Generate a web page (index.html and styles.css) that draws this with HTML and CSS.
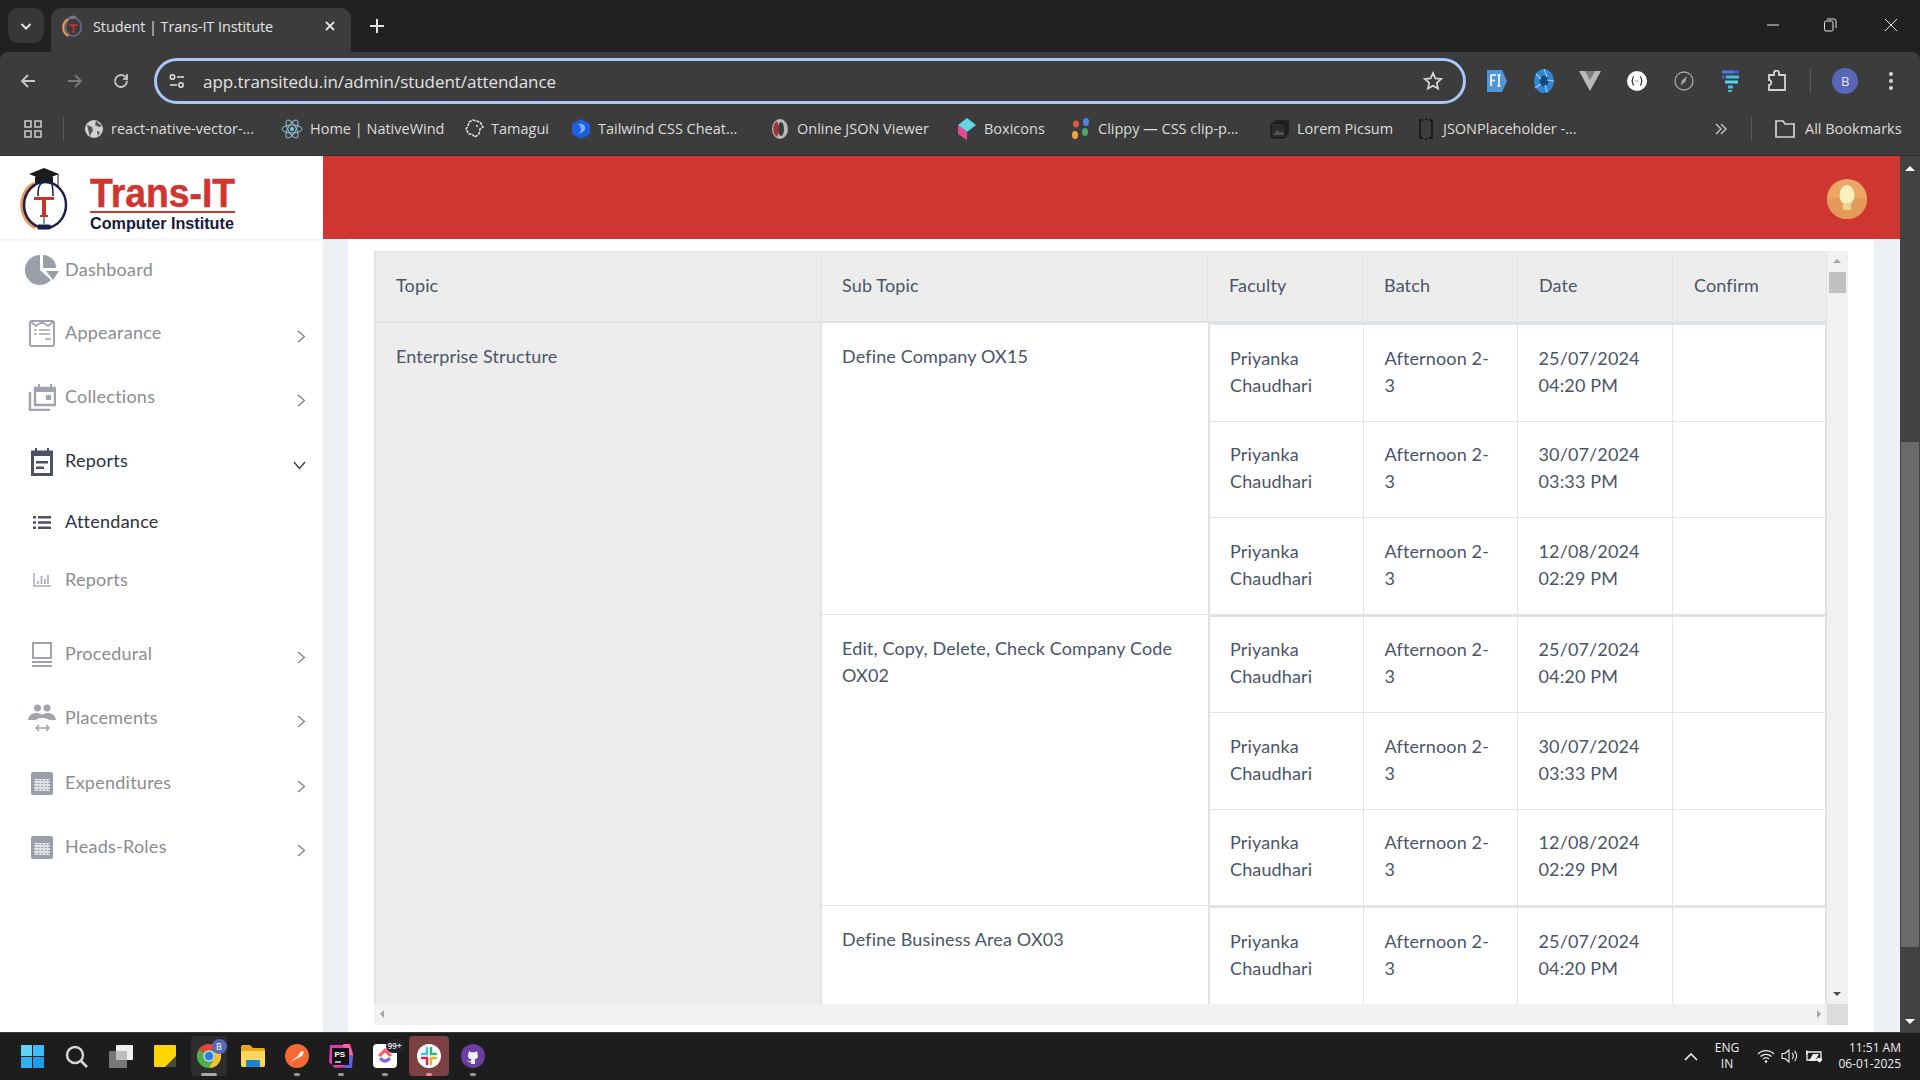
FILE: index.html
```html
<!DOCTYPE html>
<html lang="en">
<head>
<meta charset="utf-8">
<title>Student | Trans-IT Institute</title>
<link rel="stylesheet" href="styles.css">
</head>
<body>
<div class="tabstrip">
  <div class="tabsearch"><svg width="14" height="14" viewBox="0 0 14 14"><path d="M2.500 5l4.500 4.500L11.500 5" fill="none" stroke="#e3e3e3" stroke-width="2"/></svg></div>
  <div class="tab">
    <svg class="favicon" width="22" height="22" viewBox="0 0 48 48"><path d="M14 5L24 1l10 4-10 4z" fill="#888"/><path d="M15 9C1 14-3 36 14 46" fill="none" stroke="#e8954f" stroke-width="5"/><ellipse cx="25" cy="26" rx="17" ry="20" fill="none" stroke="#6d6f9a" stroke-width="3"/><path d="M16 20h18v4h-7v15h-4V24h-7z" fill="#c9322d"/></svg>
    <span class="tabtitle">Student | Trans-IT Institute</span>
    <svg class="tabclose" width="12" height="12" viewBox="0 0 12 12"><path d="M2 2l8 8M10 2l-8 8" stroke="#e3e3e3" stroke-width="1.800"/></svg>
  </div>
  <svg class="newtab" width="16" height="16" viewBox="0 0 16 16"><path d="M8 1v14M1 8h14" stroke="#e3e3e3" stroke-width="2"/></svg>
  <div class="winctl">
    <svg class="win-min" width="14" height="14" viewBox="0 0 14 14"><path d="M1 7h12" stroke="#e3e3e3"/></svg>
    <svg class="win-max" width="14" height="14" viewBox="0 0 14 14"><rect x="1.500" y="3" width="8.500" height="10" rx="1.500" fill="none" stroke="#e3e3e3"/><path d="M4 1h7a2 2 0 0 1 2 2v7" fill="none" stroke="#e3e3e3"/></svg>
    <svg width="14" height="14" viewBox="0 0 14 14"><path d="M1 1l12 12M13 1L1 13" stroke="#e3e3e3"/></svg>
  </div>
</div>

<div class="toolbar">
  <div class="navbtn"><svg width="18" height="18" viewBox="0 0 18 18"><path d="M16 9H3M9 3L3 9l6 6" fill="none" stroke="#c7c7c7" stroke-width="1.800"/></svg></div>
  <div class="navbtn"><svg width="18" height="18" viewBox="0 0 18 18"><path d="M2 9h13M9 3l6 6-6 6" fill="none" stroke="#7a7a7a" stroke-width="1.800"/></svg></div>
  <div class="navbtn"><svg width="18" height="18" viewBox="0 0 18 18"><path d="M15 9a6 6 0 1 1-1.800-4.300L15 6.500V2" fill="none" stroke="#c7c7c7" stroke-width="1.800"/><path d="M15.500 7H11" stroke="#c7c7c7" stroke-width="1.800"/></svg></div>
  <div class="omnibox">
    <svg class="siteinfo" width="18" height="18" viewBox="0 0 18 18"><circle cx="4.500" cy="5" r="2.200" fill="none" stroke="#e3e3e3" stroke-width="1.500"/><path d="M9 5h7M2 13h7" stroke="#e3e3e3" stroke-width="1.500"/><circle cx="13" cy="13" r="2.200" fill="none" stroke="#e3e3e3" stroke-width="1.500"/></svg>
    <span class="url">app.transitedu.in/admin/student/attendance</span>
    <svg class="star" width="20" height="20" viewBox="0 0 20 20"><path d="M10 2l2.400 5.400 5.800.6-4.400 3.900 1.300 5.700L10 14.700l-5.100 2.900 1.300-5.700L1.800 8l5.800-.6z" fill="none" stroke="#d8d8d8" stroke-width="1.700"/></svg>
  </div>
  <div class="extensions">
    <div class="ext"><svg width="22" height="24" viewBox="0 0 22 24"><path d="M1 1h15l5 11-5 11H1z" fill="#4f97d9"/><path d="M5 6h5M5 6v11M5 11.500h4M13 6v11M11.500 6h3M11.500 17h3" stroke="#fff" stroke-width="1.600" fill="none"/></svg></div>
    <div class="ext"><svg width="22" height="26" viewBox="0 0 22 26"><ellipse cx="11" cy="13" rx="10" ry="12" fill="#2f86d3"/><ellipse cx="11" cy="13" rx="4.500" ry="5.500" fill="#10497c"/><path d="M11 1l3 8M21 13l-7-1M14 24l-2-7M2 20l6-4M3 6l5 5" stroke="#a8d2f0" stroke-width="1.100"/></svg></div>
    <div class="ext"><svg width="22" height="20" viewBox="0 0 22 20"><path d="M0 0h22L11 20z" fill="#b9b9b9"/><path d="M6 0h10l-5 9z" fill="#7b7b7b"/></svg></div>
    <div class="ext"><svg width="20" height="20" viewBox="0 0 20 20"><circle cx="10" cy="10" r="10" fill="#fff"/><path d="M7 5.500C5 5.500 6.500 10 4.500 10c2 0 .5 4.500 2.500 4.500M13 5.500c2 0 .5 4.500 2.500 4.500-2 0-.5 4.500-2.500 4.500" fill="none" stroke="#222" stroke-width="1.200"/><path d="M8.500 10h.8M10.500 10h.8" stroke="#222" stroke-width="1.200"/></svg></div>
    <div class="ext"><svg width="20" height="20" viewBox="0 0 20 20"><circle cx="10" cy="10" r="9" fill="none" stroke="#a8a8a8" stroke-width="1.300"/><path d="M6.500 14.500L8 9.500l5-4.500-1.500 5.500z" fill="#a8a8a8"/></svg></div>
    <div class="ext"><svg width="22" height="22" viewBox="0 0 22 22"><path d="M3 2h12" stroke="#4a78e8" stroke-width="3"/><path d="M15 2h5M3 7h3" stroke="#3b5fc4" stroke-width="3"/><path d="M7 7h13" stroke="#3fc0ea" stroke-width="3"/><path d="M6 12h13" stroke="#56d5ee" stroke-width="3"/><path d="M9 17h5" stroke="#3fc0ea" stroke-width="3"/><path d="M9 21h4" stroke="#3fc0ea" stroke-width="2"/></svg></div>
    <div class="ext"><svg width="22" height="22" viewBox="0 0 22 22"><path d="M3 5h5V3a2.500 2.500 0 0 1 5 0v2h6v15H3v-5h1a3 3 0 0 0 0-5H3z" fill="none" stroke="#d4d4d4" stroke-width="1.800"/></svg></div>
  </div>
  <div class="toolsep"></div>
  <div class="avatarbox"><span class="avatar">B</span></div>
  <div class="avatarbox"><svg width="6" height="20" viewBox="0 0 6 20"><circle cx="3" cy="3" r="2" fill="#d8d8d8"/><circle cx="3" cy="10" r="2" fill="#d8d8d8"/><circle cx="3" cy="17" r="2" fill="#d8d8d8"/></svg></div>
</div>

<div class="bookmarks">
  <svg class="bm-apps" width="18" height="18" viewBox="0 0 18 18"><path d="M1 1h6v6H1zM11 1h6v6h-6zM1 11h6v6H1zM11 11h6v6h-6z" fill="none" stroke="#c7c7c7" stroke-width="1.600"/></svg>
  <span class="bm-sep"></span>
  <div class="bm"><svg width="20" height="20" viewBox="0 0 20 20"><circle cx="10" cy="10" r="9" fill="#cfcfcf"/><path d="M3 6l5 2 1 4-2 2-1 4M12 2l-1 4 4 2 3-1M13 12l3 1-2 4z" fill="#555"/></svg><span>react-native-vector-...</span></div>
  <div class="bm"><svg width="22" height="22" viewBox="0 0 22 22"><g fill="none" stroke="#8fc5d8" stroke-width="1"><ellipse cx="11" cy="11" rx="10" ry="4"/><ellipse cx="11" cy="11" rx="10" ry="4" transform="rotate(60 11 11)"/><ellipse cx="11" cy="11" rx="10" ry="4" transform="rotate(120 11 11)"/></g><circle cx="11" cy="11" r="2" fill="#8fc5d8"/></svg><span>Home | NativeWind</span></div>
  <div class="bm"><svg width="20" height="20" viewBox="0 0 20 20"><path d="M5 3l4-2 7 2 3 5-3 2-1 5-4 3-3-3-3 0-3-5 2-3z" fill="none" stroke="#e6e6e6" stroke-width="1.500" stroke-dasharray="3 1"/><circle cx="13" cy="7" r="1" fill="#e6e6e6"/></svg><span>Tamagui</span></div>
  <div class="bm"><svg width="20" height="20" viewBox="0 0 20 20"><path d="M10 0l9 5v10l-9 5-9-5V5z" fill="#1d5fe0"/><path d="M7 5c5-1 8 2 7 5s-4 4-7 5c2-2 3-3 3-5S9 7 7 5z" fill="#7bb0ff"/></svg><span>Tailwind CSS Cheat...</span></div>
  <div class="bm"><svg width="20" height="22" viewBox="0 0 20 22"><ellipse cx="10" cy="11" rx="8" ry="10" fill="#b9b9b9"/><path d="M7 3c-5 3-5 13 0 16 2-4 2-12 0-16z" fill="#a8312e"/><ellipse cx="11" cy="11" rx="3" ry="7" fill="#3c3c3c"/></svg><span>Online JSON Viewer</span></div>
  <div class="bm"><svg width="20" height="22" viewBox="0 0 20 22"><path d="M10 0l9 7-9 7-9-7z" fill="#62d6e3"/><path d="M1 7l9 7v8l-9-6z" fill="#e9478f"/></svg><span>Boxicons</span></div>
  <div class="bm"><svg width="20" height="22" viewBox="0 0 20 22"><ellipse cx="5" cy="6" rx="3" ry="3.500" fill="#d95a3d"/><ellipse cx="15" cy="4" rx="3" ry="4" fill="#4a86e8"/><ellipse cx="4" cy="17" rx="3" ry="4" fill="#f0a63a"/><ellipse cx="14" cy="14" rx="3" ry="4" fill="#4ca667"/></svg><span>Clippy — CSS clip-p...</span></div>
  <div class="bm"><svg width="20" height="20" viewBox="0 0 20 20"><rect x="4" y="1" width="15" height="15" rx="2" fill="#222"/><rect x="1" y="4" width="15" height="15" rx="2" fill="#2b2b2b" stroke="#111"/><path d="M3 16l4-5 3 3 2-2 2 4z" fill="#555"/></svg><span>Lorem Picsum</span></div>
  <div class="bm"><svg width="20" height="22" viewBox="0 0 20 22"><path d="M7 2H4v18h3M13 2h3v18h-3M10 0v2M10 20v2" fill="none" stroke="#111" stroke-width="1.500"/></svg><span>JSONPlaceholder -...</span></div>
  <svg class="bm-more" width="14" height="14" viewBox="0 0 14 14"><path d="M2 2l5 5-5 5M7 2l5 5-5 5" fill="none" stroke="#c7c7c7" stroke-width="1.400"/></svg>
  <span class="bm-sep"></span>
  <svg class="bm-folder" width="22" height="20" viewBox="0 0 22 20"><path d="M2 2h7l2 3h9v13H2z" fill="none" stroke="#d4d4d4" stroke-width="1.700"/></svg>
  <span class="bm-all">All Bookmarks</span>
</div>

<div class="page">
  <div class="main">
    <header class="topbar">
      <div class="brand">
        <svg class="brand-mark" width="48" height="63" viewBox="0 0 48 63">
          <path d="M9 7L24 1l15 6-15 6z" fill="#1b1b1b"/><path d="M15 10v6h18v-6" fill="#1b1b1b"/><path d="M38 7v13" stroke="#1b1b1b"/>
          <path d="M15 17C0 24-3 50 16 60" fill="none" stroke="#e8954f" stroke-width="5"/>
          <ellipse cx="25" cy="38" rx="21" ry="23" fill="none" stroke="#1b1f4b" stroke-width="2.500"/>
          <path d="M26 15c-8 0-8 8-8 14M31 15c2 3 2 8 2 14" fill="none" stroke="#1b1f4b" stroke-width="1.500"/>
          <path d="M14 30h20v3h-8v15h2v2h-8v-2h2V33h-8z" fill="#c9322d"/>
          <path d="M24 50v7M18 58h11l4 2-4 2H18z" fill="#1b1f4b" stroke="#1b1f4b"/>
        </svg>
        <div class="brand-text">
          <span class="brand-name">Trans-IT</span>
          <span class="brand-sub">Computer Institute</span>
        </div>
      </div>
      <div class="redbar">
        <div class="bulb"><svg width="40" height="40" viewBox="0 0 40 40"><circle cx="20" cy="20" r="20" fill="#eda765"/><path d="M0 20a20 20 0 0 0 40 0v-1H0z" fill="#e49a5b"/><ellipse cx="20" cy="16" rx="7.500" ry="10" fill="#fdeec0"/><rect x="16" y="24" width="8" height="7" fill="#efd28f"/></svg></div>
      </div>
    </header>
    <div class="body-row">
      <nav class="sidebar">
        <a class="nav nav-first">
          <span class="ico"><svg width="34" height="30" viewBox="0 0 34 30"><path d="M15 0A15 15 0 1 0 26 25L15 15z" fill="#9a9ea9"/><path d="M18 0a13 13 0 0 1 13 13H18z" fill="#9a9ea9"/><path d="M21 16h13l-6 9z" fill="#9a9ea9"/></svg></span>
          <span class="label">Dashboard</span>
        </a>
        <a class="nav">
          <span class="ico"><svg width="26" height="27" viewBox="0 0 26 27"><rect x="1" y="1" width="24" height="25" rx="2" fill="none" stroke="#a1a4ae" stroke-width="2"/><path d="M2 2l5 4 6-4 6 4 5-4M5 10h3M10 10h11M5 14h3M10 14h11M16 19h6" fill="none" stroke="#a1a4ae" stroke-width="1.700"/></svg></span>
          <span class="label">Appearance</span>
          <svg class="chev" width="9" height="13" viewBox="0 0 9 13"><path d="M1 1l6.500 5.500L1 12" fill="none" stroke="#777" stroke-width="1.100"/></svg>
        </a>
        <a class="nav">
          <span class="ico"><svg width="28" height="28" viewBox="0 0 28 28"><path d="M7 5h20v17H7z" fill="none" stroke="#a1a4ae" stroke-width="2.400"/><path d="M7 5h20v4H7z" fill="#a1a4ae"/><path d="M11 1v4M23 1v4" stroke="#a1a4ae" stroke-width="2"/><rect x="18" y="12" width="5" height="5" fill="#a1a4ae"/><path d="M2 9v18h20" fill="none" stroke="#a1a4ae" stroke-width="2.400"/></svg></span>
          <span class="label">Collections</span>
          <svg class="chev" width="9" height="13" viewBox="0 0 9 13"><path d="M1 1l6.500 5.500L1 12" fill="none" stroke="#777" stroke-width="1.100"/></svg>
        </a>
        <a class="nav is-open">
          <span class="ico"><svg width="22" height="29" viewBox="0 0 22 29"><path d="M1.500 5h19v22.500h-19z" fill="none" stroke="#4d5066" stroke-width="3"/><path d="M1 4h20v5H1z" fill="#4d5066"/><path d="M5 1v4M17 1v4" stroke="#4d5066" stroke-width="2"/><path d="M5 14h12v2.500H5zM5 19.500h8V22H5z" fill="#4d5066"/></svg></span>
          <span class="label">Reports</span>
          <svg class="chev-down" width="13" height="9" viewBox="0 0 13 9"><path d="M1 1l5.500 6.500L12 1" fill="none" stroke="#333" stroke-width="1.200"/></svg>
        </a>
        <a class="sub is-current">
          <span class="ico"><svg width="18" height="15" viewBox="0 0 18 15"><path d="M0 1h3v2.400H0zM5 1h13v2.400H5zM0 6.300h3v2.400H0zM5 6.300h13v2.400H5zM0 11.600h3V14H0zM5 11.600h13V14H5z" fill="#4d5066"/></svg></span>
          <span class="label">Attendance</span>
        </a>
        <a class="sub">
          <span class="ico"><svg width="18" height="14" viewBox="0 0 18 14"><path d="M1 0v13h17" fill="none" stroke="#a9acb7" stroke-width="1.500"/><path d="M5 8v3M8.500 3v8M12 6v5M15 2v9" stroke="#a9acb7" stroke-width="1.700"/></svg></span>
          <span class="label">Reports</span>
        </a>
        <a class="nav nav-gap">
          <span class="ico"><svg width="20" height="25" viewBox="0 0 20 25"><rect x="1" y="1" width="18" height="15" fill="none" stroke="#a1a4ae" stroke-width="2"/><path d="M0 20h20M0 24h20" stroke="#a1a4ae" stroke-width="2"/></svg></span>
          <span class="label">Procedural</span>
          <svg class="chev" width="9" height="13" viewBox="0 0 9 13"><path d="M1 1l6.500 5.500L1 12" fill="none" stroke="#777" stroke-width="1.100"/></svg>
        </a>
        <a class="nav">
          <span class="ico"><svg width="28" height="28" viewBox="0 0 28 28"><circle cx="9.500" cy="4" r="3.500" fill="#a1a4ae"/><circle cx="19" cy="4" r="3.500" fill="#a1a4ae"/><path d="M0 16c1-6 5-7 9-7 3 0 4 1 5 2 1-1 3-2 6-2 4 0 7 2 8 7h-7c-1-1-3-2-6-2-5 0-6 1-7 2z" fill="#a1a4ae"/><path d="M8 24h13M11 21l-3 3 3 3M18 21l3 3-3 3" fill="none" stroke="#a1a4ae" stroke-width="1.500"/></svg></span>
          <span class="label">Placements</span>
          <svg class="chev" width="9" height="13" viewBox="0 0 9 13"><path d="M1 1l6.500 5.500L1 12" fill="none" stroke="#777" stroke-width="1.100"/></svg>
        </a>
        <a class="nav nav-shift">
          <span class="ico"><svg width="22" height="23" viewBox="0 0 22 23"><rect width="22" height="23" rx="2" fill="#9a9ea9"/><rect x="3" y="7" width="16" height="12" fill="#dfe0e4"/><path d="M3 8.500h16M3 11.500h16M3 14.500h16M3 17.500h16" stroke="#9a9ea9" stroke-dasharray="2 1.500"/></svg></span>
          <span class="label">Expenditures</span>
          <svg class="chev" width="9" height="13" viewBox="0 0 9 13"><path d="M1 1l6.500 5.500L1 12" fill="none" stroke="#777" stroke-width="1.100"/></svg>
        </a>
        <a class="nav">
          <span class="ico"><svg width="22" height="23" viewBox="0 0 22 23"><rect width="22" height="23" rx="2" fill="#9a9ea9"/><rect x="3" y="7" width="16" height="12" fill="#dfe0e4"/><path d="M3 8.500h16M3 11.500h16M3 14.500h16M3 17.500h16" stroke="#9a9ea9" stroke-dasharray="2 1.500"/></svg></span>
          <span class="label">Heads-Roles</span>
          <svg class="chev" width="9" height="13" viewBox="0 0 9 13"><path d="M1 1l6.500 5.500L1 12" fill="none" stroke="#777" stroke-width="1.100"/></svg>
        </a>
      </nav>
      <main class="content">
        <section class="card">
          <div class="tablebox">
            <div class="tableview">
              <div class="thead">
                <div class="th th-topic">Topic</div>
                <div class="th th-sub">Sub Topic</div>
                <div class="th">Faculty</div>
                <div class="th">Batch</div>
                <div class="th">Date</div>
                <div class="th">Confirm</div>
              </div>
              <div class="tbody">
                <div class="topic">Enterprise Structure</div>
                <div class="groups">
                  <div class="group">
                    <div class="subtopic">Define Company OX15</div>
                    <div class="rows">
                      <div class="row"><div class="td">Priyanka Chaudhari</div><div class="td">Afternoon 2-3</div><div class="td">25/07/2024 04:20 PM</div><div class="td"></div></div>
                      <div class="row"><div class="td">Priyanka Chaudhari</div><div class="td">Afternoon 2-3</div><div class="td">30/07/2024 03:33 PM</div><div class="td"></div></div>
                      <div class="row"><div class="td">Priyanka Chaudhari</div><div class="td">Afternoon 2-3</div><div class="td">12/08/2024 02:29 PM</div><div class="td"></div></div>
                    </div>
                  </div>
                  <div class="group">
                    <div class="subtopic">Edit, Copy, Delete, Check Company Code OX02</div>
                    <div class="rows">
                      <div class="row"><div class="td">Priyanka Chaudhari</div><div class="td">Afternoon 2-3</div><div class="td">25/07/2024 04:20 PM</div><div class="td"></div></div>
                      <div class="row"><div class="td">Priyanka Chaudhari</div><div class="td">Afternoon 2-3</div><div class="td">30/07/2024 03:33 PM</div><div class="td"></div></div>
                      <div class="row"><div class="td">Priyanka Chaudhari</div><div class="td">Afternoon 2-3</div><div class="td">12/08/2024 02:29 PM</div><div class="td"></div></div>
                    </div>
                  </div>
                  <div class="group">
                    <div class="subtopic">Define Business Area OX03</div>
                    <div class="rows">
                      <div class="row"><div class="td">Priyanka Chaudhari</div><div class="td">Afternoon 2-3</div><div class="td">25/07/2024 04:20 PM</div><div class="td"></div></div>
                    </div>
                  </div>
                </div>
              </div>
            </div>
            <div class="vscroll">
              <span class="arr arr-up"></span>
              <span class="vthumb"></span>
              <span class="arr arr-down"></span>
            </div>
            <div class="hscroll">
              <span class="arr arr-left"></span>
              <span class="arr arr-right"></span>
            </div>
            <div class="corner"></div>
          </div>
        </section>
      </main>
    </div>
  </div>
  <div class="pagescroll">
    <span class="parr parr-up"></span>
    <span class="pthumb"></span>
    <span class="parr parr-down"></span>
  </div>
</div>

<footer class="taskbar">
  <div class="tb"><svg width="23" height="23" viewBox="0 0 23 23"><path d="M0 0h11v11H0z" fill="#5fd4f7"/><path d="M12 0h11v11H12z" fill="#3dbcf5"/><path d="M0 12h11v11H0z" fill="#2ab2f2"/><path d="M12 12h11v11H12z" fill="#169cf0"/></svg></div>
  <div class="tb"><svg width="23" height="23" viewBox="0 0 23 23"><circle cx="10" cy="10" r="8" fill="none" stroke="#d8d8d8" stroke-width="2.400"/><path d="M16 16l6 6" stroke="#d8d8d8" stroke-width="2.600"/></svg></div>
  <div class="tb"><svg width="24" height="23" viewBox="0 0 24 23"><rect x="7" y="0" width="17" height="15" rx="1" fill="#f0f0f0"/><rect x="0" y="6" width="18" height="17" rx="1" fill="#777"/><rect x="7" y="6" width="11" height="9" fill="#bdbdbd"/></svg></div>
  <div class="tb"><svg width="22" height="22" viewBox="0 0 22 22"><path d="M0 1a1 1 0 0 1 1-1h20a1 1 0 0 1 1 1v12l-9 9H1a1 1 0 0 1-1-1z" fill="#ffd400"/><path d="M22 11v10a1 1 0 0 1-1 1H11z" fill="#4a4a3a"/></svg></div>
  <div class="tb tb-chrome">
    <svg width="24" height="24" viewBox="0 0 24 24"><circle cx="12" cy="12" r="12" fill="#4caf50"/><path d="M12 0a12 12 0 0 1 10.400 6H12a6 6 0 0 0-5.200 3L1.600 6A12 12 0 0 1 12 0z" fill="#ea4335"/><path d="M22.400 6A12 12 0 0 1 12 24l5.200-9A6 6 0 0 0 17 9z" fill="#fbc02d"/><circle cx="12" cy="12" r="5.500" fill="#fff"/><circle cx="12" cy="12" r="4.500" fill="#2f7de1"/></svg>
    <span class="tb-badge">B</span>
    <span class="tb-dot tb-dot-wide"></span>
  </div>
  <div class="tb"><svg width="24" height="22" viewBox="0 0 24 22"><path d="M0 2a2 2 0 0 1 2-2h7l3 3h10a2 2 0 0 1 2 2v15a2 2 0 0 1-2 2H2a2 2 0 0 1-2-2z" fill="#e8a820"/><path d="M0 6h24v14a2 2 0 0 1-2 2H2a2 2 0 0 1-2-2z" fill="#fbd75b"/><rect x="5" y="15" width="14" height="7" rx="1" fill="#1b84d0"/></svg></div>
  <div class="tb"><svg width="24" height="24" viewBox="0 0 24 24"><circle cx="12" cy="12" r="12" fill="#f76935"/><path d="M5 18l8-6 3-5 3 1-2 4-6 3z" fill="#fff"/></svg><span class="tb-dot"></span></div>
  <div class="tb"><svg width="24" height="24" viewBox="0 0 24 24"><path d="M1 1l20 0 3 8-2 14-16 1-6-6z" fill="#e838b0"/><path d="M14 0h7l3 12-8 0z" fill="#ff5fa2"/><path d="M18 10l6 2-1 12-8 0z" fill="#5a5fe8"/><rect x="3" y="4" width="17" height="17" fill="#111"/><text x="5.500" y="13" class="ps">PS</text><path d="M6 18h6" stroke="#fff" stroke-width="1.300"/></svg><span class="tb-dot"></span></div>
  <div class="tb"><svg width="24" height="24" viewBox="0 0 24 24"><rect width="24" height="24" rx="4" fill="#fff"/><path d="M6 15l2.500-2c2 3 5 3 7 0l2.500 2c-3.500 5-8.500 5-12 0z" fill="#7b68ee"/><path d="M12 4L5 11l2.300 2L12 8.500l4.700 4.500L19 11z" fill="#fc5a6a"/></svg><span class="tb-99">99+</span><span class="tb-dot"></span></div>
  <div class="tb tb-slack"><svg width="24" height="24" viewBox="0 0 24 24"><circle cx="12" cy="12" r="12" fill="#fff"/><path d="M10 4v6H5" fill="none" stroke="#36c5f0" stroke-width="2.500" stroke-linecap="round"/><path d="M14 4v6h0" fill="none" stroke="#2eb67d" stroke-width="2.500" stroke-linecap="round"/><path d="M14 10h5" stroke="#2eb67d" stroke-width="2.500" stroke-linecap="round"/><path d="M19 14h-5v6" fill="none" stroke="#ecb22e" stroke-width="2.500" stroke-linecap="round"/><path d="M5 14h5v6" fill="none" stroke="#e01e5a" stroke-width="2.500" stroke-linecap="round"/></svg><span class="tb-dot tb-dot-pink"></span></div>
  <div class="tb"><svg width="24" height="24" viewBox="0 0 24 24"><circle cx="12" cy="12" r="12" fill="#6b3fa0"/><path d="M8 7l2 1.200h4L16 7l.6 3c.9 2.600 0 5-3.100 5.300.6.500.6 1.200.6 3v1.700h-4.200V18c-2 .4-3-.5-3.500-1.800 1 .4 1.700 1.300 3.500.8 0-.8.200-1.400.5-1.700-3 -.3-4-2.700-3-5.300z" fill="#eee"/></svg><span class="tb-dot"></span></div>
  <div class="tray">
    <svg class="tray-chev" width="14" height="9" viewBox="0 0 14 9"><path d="M1 8l6-6 6 6" fill="none" stroke="#e8e8e8" stroke-width="1.700"/></svg>
    <div class="lang"><span>ENG</span><span>IN</span></div>
    <div class="trayicon"><svg width="18" height="14" viewBox="0 0 18 14"><path d="M1 5a11 11 0 0 1 16 0M3.500 7.500a8 8 0 0 1 11 0M6 10a4.500 4.500 0 0 1 6 0" fill="none" stroke="#eee" stroke-width="1.200"/><circle cx="9" cy="12.500" r="1.300" fill="#eee"/></svg></div>
    <div class="trayicon"><svg width="18" height="16" viewBox="0 0 18 16"><path d="M1 5.500h3L8 2v12l-4-3.500H1z" fill="none" stroke="#eee" stroke-width="1.100"/><path d="M11 5a4 4 0 0 1 0 6M13.500 3a7 7 0 0 1 0 10" fill="none" stroke="#eee" stroke-width="1.100"/></svg></div>
    <div class="trayicon"><svg width="18" height="16" viewBox="0 0 18 16"><path d="M2 4h14v8H2z" fill="none" stroke="#eee" stroke-width="1.300"/><path d="M1 2l3 2-3 3zM4 13l4-7h6l-4 7z" fill="#eee"/><path d="M12 11c1-2 2.500-1 2.500 0 0-1 1.500-2 2.500 0 .5 1.500-2.500 3.500-2.500 3.500S11.500 12.500 12 11z" fill="#fff"/></svg></div>
    <div class="clock"><span>11:51 AM</span><span>06-01-2025</span></div>
  </div>
</footer>
</body>
</html>
```

FILE: styles.css
```css
* { box-sizing: border-box; }
html, body { margin: 0; height: 100%; overflow: hidden; }
body {
  display: flex;
  flex-direction: column;
  height: 1080px;
  font-family: "Open Sans", "Noto Sans", sans-serif;
  background: #202221;
}

/* browser chrome */
.tabstrip {
  height: 52px;
  flex: none;
  display: flex;
  align-items: flex-end;
  background: #202221;
  padding-left: 8px;
}
.tabsearch {
  width: 36px;
  height: 35px;
  margin-bottom: 9px;
  border-radius: 10px;
  background: #363737;
  display: flex;
  align-items: center;
  justify-content: center;
}
.tab {
  width: 300px;
  height: 44px;
  margin-left: 7px;
  background: #3c3c3c;
  border-radius: 10px 10px 0 0;
  display: flex;
  align-items: center;
  padding: 0 15px 8px 11px;
  color: #e3e3e3;
}
.favicon { flex: none; }
.tabtitle { margin-left: 9px; font-size: 14.500px; flex: 1; white-space: nowrap; letter-spacing: -.1px; }
.newtab { margin: 0 0 18px 18px; }
.winctl {
  margin-left: auto;
  display: flex;
  align-self: stretch;
  align-items: center;
  padding: 0 22px 2px 0;
  gap: 46px;
}
.win-min { margin-right: -3px; }
.win-max { margin-right: 1px; }

.toolbar {
  height: 52px;
  flex: none;
  background: #3c3c3c;
  border-radius: 8px 8px 0 0;
  display: flex;
  align-items: flex-start;
  padding: 6px 0 0 5px;
}
.navbtn {
  width: 46.500px;
  height: 46px;
  display: flex;
  align-items: center;
  justify-content: center;
}
.omnibox {
  width: 1312px;
  height: 46px;
  margin-left: 9.500px;
  border: 3px solid #a8c7fa;
  border-radius: 23px;
  display: flex;
  align-items: center;
  padding: 0 20px 0 11px;
  color: #e3e3e3;
}
.siteinfo { flex: none; }
.url { margin-left: 17px; font-size: 17px; flex: 1; letter-spacing: -.05px; }
.extensions { display: flex; margin-left: 8px; }
.ext { width: 46.600px; height: 46px; display: flex; align-items: center; justify-content: center; }
.toolsep { width: 1px; height: 24px; margin: 11px 11px 0 10px; background: #5c5c5c; }
.avatarbox { width: 46px; height: 46px; display: flex; align-items: center; justify-content: center; }
.avatar {
  width: 26px;
  height: 26px;
  border-radius: 50%;
  background: #5866b8;
  color: #e8e8f8;
  font-size: 13px;
  display: flex;
  align-items: center;
  justify-content: center;
}

.bookmarks {
  height: 52px;
  flex: none;
  background: #3c3c3c;
  border-bottom: 1px solid #303030;
  display: grid;
  grid-template-columns: 39px 1px 197px 183px 107px 199px 187px 114px 199px 146px 314px 41px 1px 44px auto;
  align-items: center;
  padding-left: 24px;
  padding-bottom: 2px;
  color: #dcdcdc;
  font-size: 14.500px;
  white-space: nowrap;
}
.bm-sep { width: 1px; height: 24px; background: #5c5c5c; }
.bm { display: flex; align-items: center; gap: 7px; padding-left: 20px; overflow: hidden; }
.bm svg { flex: none; }
.bm-more { margin-left: 4px; }
.bm-folder { justify-self: end; }
.bm-all { margin-left: 9px; }

/* page */
.page {
  flex: 1;
  min-height: 0;
  display: flex;
  background: #fff;
}
.main { flex: 1; min-width: 0; display: flex; flex-direction: column; }
.topbar { height: 83px; flex: none; display: flex; }
.brand {
  width: 323px;
  flex: none;
  background: #fff;
  display: flex;
  align-items: center;
  padding: 0 0 0 20px;
  gap: 22px;
}
.brand-mark { flex: none; margin-top: 2px; }
.brand-text {
  align-self: flex-start;
  margin-top: 20.250px;
  display: flex;
  flex-direction: column;
  font-family: "Liberation Sans", Arial, sans-serif;
  font-weight: 700;
  white-space: nowrap;
}
.brand-name {
  height: 34.500px;
  font-size: 41px;
  line-height: 34.500px;
  color: #d1352f;
  -webkit-text-stroke: .5px #d1352f;
  transform: scaleX(.91);
  transform-origin: left center;
}
.brand-sub {
  width: 145px;
  border-top: 2.500px solid #d1352f;
  padding-top: 1px;
  font-size: 16.200px;
  line-height: 18px;
  color: #17183f;
}
.redbar {
  flex: 1;
  background: #cf3631;
  display: flex;
  align-items: center;
  justify-content: flex-end;
  padding-right: 33px;
}
.bulb { width: 40px; height: 40px; margin-top: 3px; }

.body-row { flex: 1; min-height: 0; display: flex; }
.sidebar {
  width: 323px;
  flex: none;
  background: #fff;
  display: flex;
  flex-direction: column;
  box-shadow: inset 0 5px 5px -5px #e4e6ea;
  font-family: Lato, sans-serif;
  font-size: 18px;
  color: #8a8c93;
}
.nav, .sub {
  display: flex;
  align-items: center;
  height: 64px;
  padding-right: 17px;
  flex: none;
}
.nav-first { height: 62px; }
.nav-gap { margin-top: 13px; }
.nav-shift { margin-top: 1px; }
.sub { height: 58px; }
.ico {
  width: 65px;
  flex: none;
  display: flex;
  justify-content: center;
  padding-left: 19px;
}
.label { flex: 1; letter-spacing: .25px; margin-top: -2px; }
.chev { margin-top: 6px; }
.chev-down { margin-top: 9px; }
.is-open, .is-current { color: #2d3040; }

.content {
  flex: 1;
  min-width: 0;
  background: #edf1f5;
  padding: 0 26px 0 25px;
  display: flex;
}
.card {
  flex: 1;
  min-width: 0;
  background: #fff;
  padding: 12px 26px 7px;
  display: flex;
}
.tablebox {
  flex: 1;
  min-width: 0;
  display: grid;
  grid-template-columns: 1453px 21px;
  grid-template-rows: 753px 21px;
  font-family: Lato, sans-serif;
  font-size: 18px;
  line-height: 27px;
  letter-spacing: .14px;
  color: #4a5568;
}
.tableview { overflow: hidden; }
.thead {
  display: grid;
  grid-template-columns: 448px 386px 155px 155px 155px 154px;
  height: 72px;
  background: #ededed;
  border-top: 1px solid #e2e4e8;
  border-bottom: 2px solid #dfe2e7;
}
.th {
  display: flex;
  align-items: center;
  padding: 0 0 2px 21px;
  border-right: 1px solid #e2e4e8;
}
.th-topic, .th-sub { padding-left: 20px; }
.th-topic { border-left: 2px solid #e2e4e8; }
.tbody { display: flex; }
.topic {
  width: 448px;
  flex: none;
  background: #ededed;
  border-left: 2px solid #e2e4e8;
  border-right: 2px solid #dfe2e7;
  padding: 20px 0 0 20px;
}
.groups { flex: 1; min-width: 0; }
.group { display: flex; }
.subtopic {
  width: 386px;
  flex: none;
  padding: 20px 22px 0 20px;
  background: #fff;
  border-bottom: 1px solid #e2e4e8;
}
.rows {
  flex: 1;
  min-width: 0;
  border-left: 2px solid #dfe2e7;
  border-right: 2px solid #dfe2e7;
  border-top: 2px solid #dfe2e7;
  background: #fff;
}
.group + .group .rows { border-top: 2.500px solid #dfe2e7; }
.row {
  display: grid;
  grid-template-columns: 153.500px 154px 155px 152px;
  height: 96.500px;
  border-bottom: 1px solid #e2e4e8;
}
.td {
  padding: 19.500px 30px 0 20px;
  border-right: 1px solid #e2e4e8;
}
.td + .td { padding-left: 21px; padding-right: 22px; }
.td:last-child { border-right: 0; }

.vscroll {
  background: #f1f1f1;
  position: relative;
}
.vthumb {
  position: absolute;
  left: 2px;
  top: 21px;
  width: 17px;
  height: 21px;
  background: #c1c1c1;
}
.hscroll { background: #f1f1f1; position: relative; }
.corner { background: #dcdcdc; }
.arr { position: absolute; width: 0; height: 0; border: 4.500px solid transparent; }
.arr-up { left: 6px; top: 8px; border-bottom-color: #a3a3a3; border-top-width: 0; }
.arr-down { left: 6px; bottom: 8px; border-top-color: #505050; border-bottom-width: 0; }
.arr-left { left: 6px; top: 6px; border-right-color: #a3a3a3; border-left-width: 0; }
.arr-right { right: 6px; top: 6px; border-left-color: #a3a3a3; border-right-width: 0; }

.pagescroll {
  width: 20px;
  flex: none;
  background: #424242;
  position: relative;
}
.pthumb { position: absolute; left: 1px; right: 1px; top: 286px; height: 505px; background: #6a6a6a; }
.parr { position: absolute; left: 5px; width: 0; height: 0; border: 5px solid transparent; }
.parr-up { top: 10px; border-bottom-color: #fff; border-top-width: 0; }
.parr-down { bottom: 8px; border-top-color: #fff; border-bottom-width: 0; }

/* taskbar */
.taskbar {
  height: 48px;
  flex: none;
  background: #1d1d1d;
  border-top: 1px solid #3a3a3a;
  display: flex;
  align-items: center;
  padding: 0 19px 1px 10.500px;
  color: #eee;
}
.tb {
  width: 44px;
  height: 40px;
  flex: none;
  display: flex;
  align-items: center;
  justify-content: center;
  position: relative;
  border-radius: 4px;
}
.tb-chrome { background: #2d2d2d; width: 36px; margin: 0 4px; }
.tb-slack { background: #7d4045; width: 40px; margin: 0 2px; }
.tb-badge {
  position: absolute;
  right: 0;
  top: 3px;
  width: 15px;
  height: 15px;
  border-radius: 50%;
  background: #5866b8;
  font-size: 9px;
  color: #fff;
  display: flex;
  align-items: center;
  justify-content: center;
}
.tb-99 {
  position: absolute;
  right: 3px;
  top: 3px;
  padding: 1px 2px;
  border-radius: 8px;
  background: #24242a;
  color: #eee;
  font-size: 8px;
  line-height: 12px;
  font-weight: 600;
}
.tb-dot {
  position: absolute;
  left: 50%;
  bottom: 0;
  width: 6px;
  height: 3px;
  margin-left: -3px;
  border-radius: 2px;
  background: #9a9a9a;
}
.tb-dot-wide { width: 16px; margin-left: -8px; background: #aaa; }
.tb-dot-pink { background: #f08a92; }
.ps { font-family: "Liberation Sans", sans-serif; font-size: 8px; font-weight: 700; fill: #fff; }
.tray { margin-left: auto; display: flex; align-items: center; }
.tray-chev { margin-right: 14px; }
.lang {
  width: 30px;
  margin-right: 12px;
  display: flex;
  flex-direction: column;
  align-items: center;
  font-size: 12px;
  line-height: 16px;
}
.trayicon { width: 24px; display: flex; justify-content: center; }
.clock {
  margin-left: 12px;
  width: 63px;
  display: flex;
  flex-direction: column;
  align-items: flex-end;
  font-size: 12px;
  line-height: 16px;
  white-space: nowrap;
}
```
